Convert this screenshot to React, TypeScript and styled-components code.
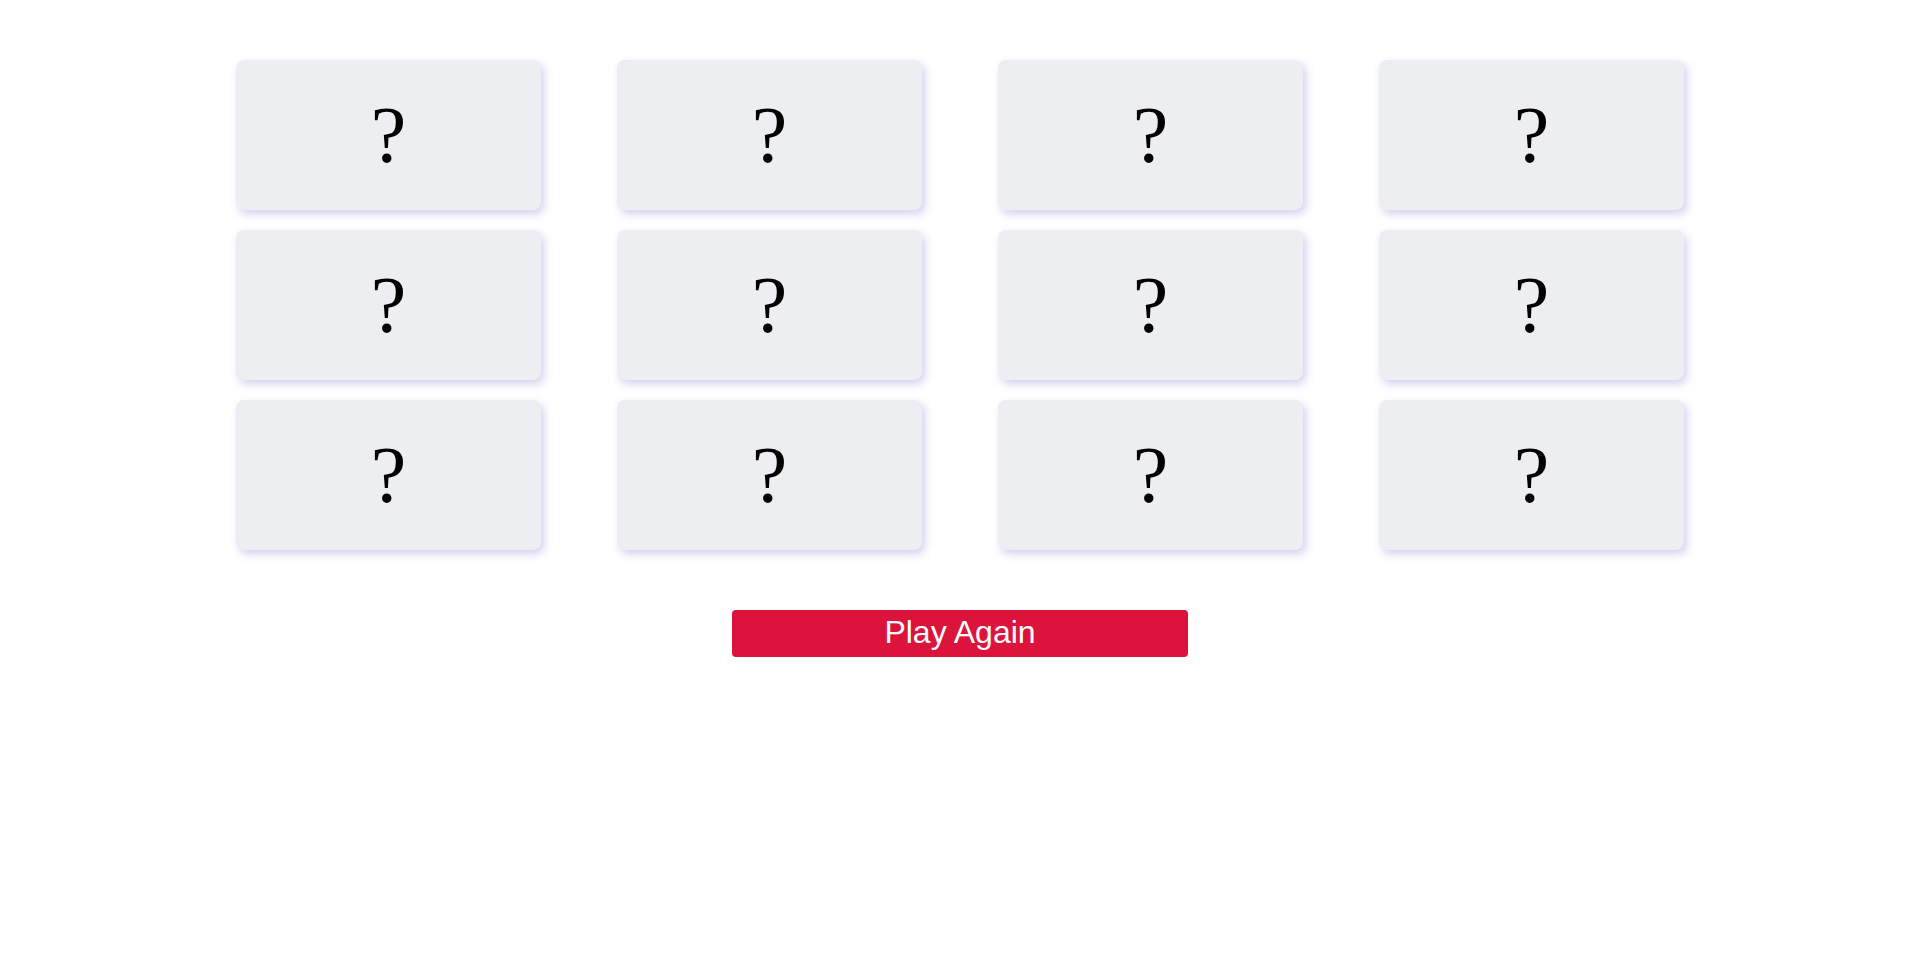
import * as React from "react";
import styled, { createGlobalStyle } from "styled-components";

const GlobalStyle = createGlobalStyle`
  body {
    margin: 0;
    background: #ffffff;
    font-family: "Liberation Serif", "Times New Roman", serif;
  }
`;

const Page = styled.div`
  display: flex;
  flex-direction: column;
  align-items: center;
  padding-top: 60px;
`;

const Board = styled.div`
  display: grid;
  grid-template-columns: repeat(4, 305px);
  grid-auto-rows: 150px;
  column-gap: 76px;
  row-gap: 20px;
`;

const Card = styled.div`
  display: flex;
  align-items: center;
  justify-content: center;
  background-color: #eceef1;
  border-radius: 8px;
  box-shadow: 3px 4px 8px rgba(110, 100, 200, 0.3);
  font-family: "Liberation Serif", "Times New Roman", serif;
  font-size: 80px;
  color: #000;
  cursor: pointer;
  user-select: none;
`;

const PlayButton = styled.button`
  margin-top: 60px;
  width: 456px;
  height: 47px;
  border: none;
  border-radius: 4px;
  background-color: #dc143c;
  color: #fff;
  font-family: "Liberation Sans", Arial, sans-serif;
  font-size: 32px;
  line-height: 1;
  padding: 0 0 3px;
  cursor: pointer;
`;

const cards = Array.from({ length: 12 }, (_, i) => i);

export default function App() {
  return (
    <Page>
      <GlobalStyle />
      <Board>
        {cards.map((i) => (
          <Card key={i}>?</Card>
        ))}
      </Board>
      <PlayButton>Play Again</PlayButton>
    </Page>
  );
}
